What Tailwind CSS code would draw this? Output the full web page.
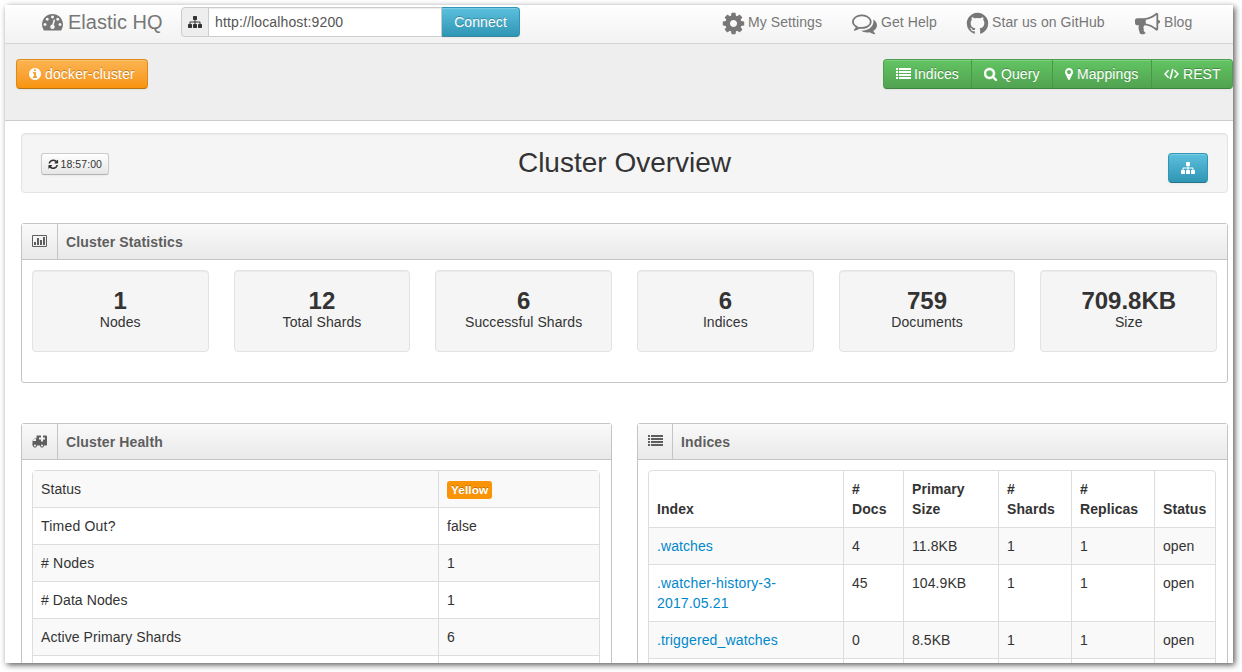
<!DOCTYPE html>
<html lang="en">
<head>
<meta charset="utf-8">
<title>Elastic HQ</title>
<script src="https://cdn.jsdelivr.net/npm/@tailwindcss/browser@4"></script>
</head>
<body class="h-[672px] overflow-hidden bg-white pt-[5px] pl-[5px] font-['Liberation_Sans',Arial,sans-serif] text-sm leading-5 tracking-[0.08px] text-[#333]">
<svg class="hidden" xmlns="http://www.w3.org/2000/svg">
  <symbol id="sitemap" viewBox="0 0 1792 1792"><path d="M1792 1248v320q0 40-28 68t-68 28h-320q-40 0-68-28t-28-68v-320q0-40 28-68t68-28h96v-192h-512v192h96q40 0 68 28t28 68v320q0 40-28 68t-68 28h-320q-40 0-68-28t-28-68v-320q0-40 28-68t68-28h96v-192h-512v192h96q40 0 68 28t28 68v320q0 40-28 68t-68 28h-320q-40 0-68-28t-28-68v-320q0-40 28-68t68-28h96v-192q0-52 38-90t90-38h512v-192h-96q-40 0-68-28t-28-68v-320q0-40 28-68t68-28h320q40 0 68 28t28 68v320q0 40-28 68t-68 28h-96v192h512q52 0 90 38t38 90v192h96q40 0 68 28t28 68z"/></symbol>
  <symbol id="list" viewBox="0 0 15 12"><path d="M0 0h2v2H0zM3 0h12v2H3zM0 3h2v2H0zM3 3h12v2H3zM0 6h2v2H0zM3 6h12v2H3zM0 9h2v2H0zM3 9h12v2H3z"/></symbol>
</svg>
<div class="h-[658px] w-[1228px] overflow-hidden bg-white shadow-[2px_2px_6px_rgba(0,0,0,0.65)]">
  <nav class="flex h-[39px] items-start border-b border-[#d4d4d4] bg-linear-to-b from-white to-[#f2f2f2] text-[#777]">
    <div class="flex w-[176px] pl-[37px] pt-[7px] text-xl tracking-normal">
      <svg class="mr-[5px] -mt-px size-[21px]" viewBox="0 0 1792 1792" fill="currentColor"><path d="M384 1152q0-53-37.500-90.500t-90.500-37.500-90.500 37.500-37.500 90.500 37.500 90.500 90.500 37.500 90.500-37.500 37.500-90.500zm192-448q0-53-37.500-90.500t-90.500-37.500-90.500 37.500-37.500 90.500 37.500 90.500 90.500 37.500 90.500-37.500 37.500-90.500zm428 481l101-382q6-26-7.500-48.500t-38.500-29.500-48 6.500-30 39.500l-101 382q-60 5-107 43.500t-63 98.500q-20 77 20 146t117 89 146-20 89-117q16-60-6-117t-72-91zm660-33q0-53-37.500-90.500t-90.500-37.500-90.500 37.500-37.500 90.500 37.500 90.500 90.500 37.500 90.500-37.500 37.500-90.500zm-640-640q0-53-37.500-90.500t-90.500-37.500-90.500 37.500-37.500 90.500 37.500 90.500 90.500 37.500 90.500-37.500 37.500-90.500zm448 192q0-53-37.500-90.500t-90.500-37.500-90.500 37.500-37.500 90.500 37.500 90.500 90.500 37.500 90.500-37.500 37.500-90.500zm320 448q0 261-141 483-19 29-54 29h-1402q-35 0-54-29-141-221-141-483 0-182 71-348t191-286 286-191 348-71 348 71 286 191 191 286 71 348z"/></svg>
      <span class="leading-5">Elastic HQ</span>
    </div>
    <div class="mt-[2px] flex h-[30px]">
      <div class="flex w-7 items-center justify-center rounded-l border border-[#ccc] bg-[#eee] text-[#333]"><svg class="size-[14px]" fill="currentColor"><use href="#sitemap"/></svg></div>
      <div class="-ml-px w-[234px] border border-[#ccc] bg-white py-1 pl-[6px] tracking-[0.14px] text-[#555] shadow-[inset_0_1px_1px_rgba(0,0,0,0.075)]">http://localhost:9200</div>
      <div class="w-[78px] rounded-r border border-l-0 border-[#2f96b4] border-b-[#1f6377]/60 bg-linear-to-b from-[#5bc0de] to-[#2f96b4] py-1 text-center text-white shadow-[inset_0_1px_0_rgba(255,255,255,0.2),0_1px_2px_rgba(0,0,0,0.05)] text-shadow-[0_-1px_0_rgba(0,0,0,0.25)]">Connect</div>
    </div>
    <div class="ml-[201px] flex pt-[7px]">
      <a class="flex w-[131px]"><svg class="mr-[2px] mt-[-1px] h-[25px] w-[25px]" viewBox="0 0 1792 1792" fill="currentColor"><path d="M1152 896q0-106-75-181t-181-75-181 75-75 181 75 181 181 75 181-75 75-181zm512-109v222q0 12-8 23t-20 13l-185 28q-19 54-39 91 35 50 107 138 10 12 10 25t-9 23q-27 37-99 108t-94 71q-12 0-26-9l-138-108q-44 23-91 38-16 136-29 186-7 28-36 28h-222q-14 0-24.500-8.500t-11.500-21.500l-28-184q-49-16-90-37l-141 107q-10 9-25 9-14 0-25-11-126-114-165-168-7-10-7-23 0-12 8-23 15-21 51-66.500t54-70.500q-27-50-41-99l-183-27q-13-2-21-12.500t-8-23.500v-222q0-12 8-23t19-13l186-28q14-46 39-92-40-57-107-138-10-12-10-24 0-10 9-23 26-36 98.500-107.500t94.500-71.500q13 0 26 10l138 107q44-23 91-38 16-136 29-186 7-28 36-28h222q14 0 24.500 8.500t11.500 21.500l28 184q49 16 90 37l142-107q9-9 24-9 13 0 25 10 129 119 165 170 7 8 7 22 0 12-8 23-15 21-51 66.500t-54 70.500q26 50 41 98l183 28q13 2 21 12.500t8 23.500z"/></svg>My Settings</a>
      <a class="flex w-[113px]"><svg class="mr-[4px] mt-[-1px] size-[25px]" viewBox="0 0 1792 1792" fill="currentColor"><path d="M704 384q-153 0-286 52t-211.500 141-78.500 191q0 82 53 158t149 132l97 56-35 84q34-20 62-39l44-31 53 10q78 14 153 14 153 0 286-52t211.500-141 78.500-191-78.500-191-211.500-141-286-52zm0-128q191 0 353.500 68.500t256.500 186.500 94 257-94 257-256.500 186.500-353.500 68.500q-86 0-176-16-124 88-278 128-36 9-86 16h-3q-11 0-20.500-8t-11.500-21q-1-3-1-6.500t.5-6.500 2-6l2.500-5 3.500-5.500 4-5 4.500-5 4-4.500q5-6 23-25t26-29.500 22.500-29 25-38.500 20.500-44q-124-72-195-177t-71-224q0-139 94-257t256.500-186.500 353.500-68.500zm822 1169q10 24 20.500 44t25 38.500 22.500 29 26 29.500 23 25q1 1 4 4.500t4.500 5 4 5 3.500 5.500l2.500 5 2 6 .5 6.500-1 6.500q-3 14-13 22t-22 7q-50-7-86-16-154-40-278-128-90 16-176 16-271 0-472-132 58 4 88 4 161 0 309-45t264-129q125-92 192-212t67-254q0-77-23-152 129 71 204 178t75 230q0 120-71 224.500t-195 176.500z"/></svg>Get Help</a>
      <a class="flex w-[170px]"><svg class="mr-[2px] mt-[-1px] size-[25px]" viewBox="0 0 1792 1792" fill="currentColor"><path d="M896 128q209 0 385.500 103t279.500 279.500 103 385.500q0 251-146.500 451.500t-378.500 277.500q-27 5-40-7t-13-30q0-3 .5-76.500t.5-134.500q0-97-52-142 57-6 102.500-18t94-39 81-66.500 53-105 20.500-150.500q0-119-79-206 37-91-8-204-28-9-81 11t-92 44l-38 24q-93-26-192-26t-192 26q-16-11-42.500-27t-83.500-38.500-85-13.500q-45 113-8 204-79 87-79 206 0 85 20.500 150t52.500 105 80.500 67 94 39 102.500 18q-39 36-49 103-21 10-45 15t-57 5-65.500-21.500-55.500-62.500q-19-32-48.500-52t-49.500-24l-20-3q-21 0-29 4.500t-5 11.500 9 14 13 12l7 5q22 10 43.500 38t31.500 51l10 23q13 38 44 61.500t67 30 69.500 7 55.500-3.500l23-4q0 38 .5 88.500t.5 54.500q0 18-13 30t-40 7q-232-77-378.500-277.500t-146.500-451.500q0-209 103-385.500t279.500-279.500 385.500-103z"/></svg>Star us on GitHub</a>
      <a class="flex"><svg class="mr-[4px] mt-[-1px] size-[25px]" viewBox="0 0 1792 1792" fill="currentColor"><path d="M1664 640q53 0 90.500 37.500t37.500 90.500-37.500 90.500-90.500 37.500v384q0 52-38 90t-90 38q-417-347-812-380-58 19-91 66t-31 100.500 40 92.500q-20 33-23 65.500t6 58 33.500 55 48 50 61.500 50.500q-29 58-111.500 83t-168.500 11.500-132-55.500q-7-23-29.500-87.500t-32-94.500-23-89-15-101 3.500-98.500 22-110.500h-122q-66 0-113-47t-47-113v-192q0-66 47-113t113-47h480q435 0 896-384 52 0 90 38t38 90v384zm-128 604v-954q-394 302-768 343v270q377 42 768 341z"/></svg>Blog</a>
    </div>
  </nav>

  <div class="flex h-[77px] items-start justify-between border-b border-[#ccc] bg-[#eee] pl-[11px] pt-[15px] text-white text-shadow-[0_-1px_0_rgba(0,0,0,0.25)]">
    <div class="flex h-[30px] w-[132px] items-center rounded border border-[#de8a14] border-b-[#b5740f] bg-linear-to-b from-[#fbb450] to-[#f89406] pl-[11px] tracking-[0.14px] shadow-[inset_0_1px_0_rgba(255,255,255,0.2),0_1px_2px_rgba(0,0,0,0.05)]">
      <svg class="mr-[3px] size-[14px]" viewBox="0 0 1792 1792" fill="currentColor"><path d="M1152 1376v-160q0-14-9-23t-23-9h-96v-512q0-14-9-23t-23-9h-320q-14 0-23 9t-9 23v160q0 14 9 23t23 9h96v320h-96q-14 0-23 9t-9 23v160q0 14 9 23t23 9h448q14 0 23-9t9-23zm-128-896v-160q0-14-9-23t-23-9h-192q-14 0-23 9t-9 23v160q0 14 9 23t23 9h192q14 0 23-9t9-23zm640 416q0 209-103 385.500t-279.500 279.500-385.500 103-385.500-103-279.500-279.500-103-385.500 103-385.500 279.500-279.500 385.500-103 385.500 103 279.500 279.500 103 385.500z"/></svg>docker-cluster
    </div>
    <div class="flex h-[30px] w-[350px] rounded border border-[#4c9f4c] border-b-[#3d853d] bg-linear-to-b from-[#62c462] to-[#51a351] shadow-[inset_0_1px_0_rgba(255,255,255,0.2),0_1px_2px_rgba(0,0,0,0.05)]">
      <div class="flex w-[88px] items-center border-r border-[#4a974a] pl-3"><svg class="mr-[3px] h-[12px] w-[15px]" fill="currentColor"><use href="#list"/></svg>Indices</div>
      <div class="flex w-[81px] items-center border-r border-[#4a974a] pl-3"><svg class="mr-[3px] size-[14px]" viewBox="64 0 1792 1792" fill="currentColor"><path d="M1216 832q0-185-131.500-316.500t-316.500-131.500-316.500 131.500-131.500 316.500 131.500 316.500 316.500 131.500 316.500-131.500 131.500-316.500zm512 832q0 52-38 90t-90 38q-54 0-90-38l-343-342q-179 124-399 124-143 0-273.500-55.500t-225-150-150-225-55.500-273.500 55.500-273.500 150-225 225-150 273.500-55.500 273.500 55.500 225 150 150 225 55.500 273.500q0 220-124 399l343 343q37 37 37 90z" stroke="currentColor" stroke-width="60"/></svg>Query</div>
      <div class="flex w-[99px] items-center border-r border-[#4a974a] pl-3"><svg class="mr-[4px] h-[14px] w-[8px]" viewBox="384 0 1024 1792" fill="currentColor"><path d="M1152 640q0-106-75-181t-181-75-181 75-75 181 75 181 181 75 181-75 75-181zm256 0q0 109-33 179l-364 774q-16 33-47.500 52t-67.500 19-67.500-19-46.500-52l-365-774q-33-70-33-179 0-212 150-362t362-150 362 150 150 362z"/></svg>Mappings</div>
      <div class="flex items-center pl-3"><svg class="mr-[4px] h-[12px] w-[15px]" viewBox="0 0 15 12" fill="none" stroke="currentColor" stroke-width="1.6"><path d="M4.600 2.300L1 6l3.600 3.700M10.400 2.300L14 6l-3.600 3.700M8.800 1L6.200 11"/></svg>REST</div>
    </div>
  </div>

  <main class="pl-4 pr-[5px] pt-[12px]">
    <header class="flex h-[60px] items-start justify-between rounded border border-[#e3e3e3] bg-[#f5f5f5] px-[19px] pt-[19px] shadow-[inset_0_1px_1px_rgba(0,0,0,0.05)]">
      <div class="flex h-[22px] w-[68px] items-center rounded-[3px] border border-[#ccc] border-b-[#b3b3b3] bg-linear-to-b from-white to-[#e6e6e6] pl-[6px] text-[10.5px] shadow-[0_1px_2px_rgba(0,0,0,0.05)]"><svg class="mr-[2px] size-[10.5px]" viewBox="64 64 1664 1664" fill="currentColor"><path d="M1639 1056q0 5-1 7-64 268-268 434.500t-478 166.500q-146 0-282.500-55t-243.500-157l-129 129q-19 19-45 19t-45-19-19-45v-448q0-26 19-45t45-19h448q26 0 45 19t19 45-19 45l-137 137q71 66 161 102t187 36q134 0 250-65t186-179q11-17 53-117 8-23 30-23h192q13 0 22.500 9.500t9.500 22.500zm25-800v448q0 26-19 45t-45 19h-448q-26 0-45-19t-19-45 19-45l138-138q-148-137-349-137-134 0-250 65t-186 179q-11 17-53 117-8 23-30 23h-199q-13 0-22.500-9.500t-9.500-22.500v-7q65-268 270-434.500t480-166.500q146 0 284 55.500t245 156.500l130-129q19-19 45-19t45 19 19 45z"/></svg>18:57:00</div>
      <h1 class="-mt-[5px] ml-[-28px] text-[28px] leading-[30px] tracking-normal">Cluster Overview</h1>
      <div class="flex h-[30px] w-10 items-center justify-center rounded border border-[#2f96b4] border-b-[#24748c] bg-linear-to-b from-[#5bc0de] to-[#2f96b4] text-white shadow-[inset_0_1px_0_rgba(255,255,255,0.2),0_1px_2px_rgba(0,0,0,0.05)]"><svg class="size-[14px]" fill="currentColor"><use href="#sitemap"/></svg></div>
    </header>

    <section class="mt-[30px] h-[160px] rounded-[3px] border border-[#c4c4c4]">
      <div class="flex h-9 border-b border-[#c4c4c4] bg-linear-to-b from-[#fafafa] to-[#e9e9e9] text-[#5e5e5e]">
        <div class="w-9 border-r border-[#c4c4c4] pl-[10px] pt-[11px]"><svg class="h-[12px] w-[15px]" viewBox="0 0 15 12" fill="currentColor"><path fill-rule="evenodd" d="M1 0h13q1 0 1 1v10q0 1-1 1H1q-1 0-1-1V1q0-1 1-1zM1 1v10h13V1z"/><path d="M2 7h2v3H2zM5 3h2v7H5zM8 5h2v5H8zM11 2h2v8h-2z"/></svg></div>
        <h2 class="pl-2 pt-[8px] font-bold tracking-[0.14px]">Cluster Statistics</h2>
      </div>
      <div class="grid grid-cols-6 gap-x-[25.200px] px-[10px] pt-[10px] text-center">
        <div class="h-[82px] rounded border border-[#e3e3e3] bg-[#f5f5f5] pt-[20px] shadow-[inset_0_1px_1px_rgba(0,0,0,0.05)]"><b class="mb-px block text-2xl leading-5 tracking-normal">1</b>Nodes</div>
        <div class="h-[82px] rounded border border-[#e3e3e3] bg-[#f5f5f5] pt-[20px] shadow-[inset_0_1px_1px_rgba(0,0,0,0.05)]"><b class="mb-px block text-2xl leading-5 tracking-normal">12</b>Total Shards</div>
        <div class="h-[82px] rounded border border-[#e3e3e3] bg-[#f5f5f5] pt-[20px] shadow-[inset_0_1px_1px_rgba(0,0,0,0.05)]"><b class="mb-px block text-2xl leading-5 tracking-normal">6</b>Successful Shards</div>
        <div class="h-[82px] rounded border border-[#e3e3e3] bg-[#f5f5f5] pt-[20px] shadow-[inset_0_1px_1px_rgba(0,0,0,0.05)]"><b class="mb-px block text-2xl leading-5 tracking-normal">6</b>Indices</div>
        <div class="h-[82px] rounded border border-[#e3e3e3] bg-[#f5f5f5] pt-[20px] shadow-[inset_0_1px_1px_rgba(0,0,0,0.05)]"><b class="mb-px block text-2xl leading-5 tracking-normal">759</b>Documents</div>
        <div class="h-[82px] rounded border border-[#e3e3e3] bg-[#f5f5f5] pt-[20px] shadow-[inset_0_1px_1px_rgba(0,0,0,0.05)]"><b class="mb-px block text-2xl leading-5 tracking-normal">709.8KB</b>Size</div>
      </div>
    </section>

    <div class="mt-10 flex justify-between">
      <section class="h-[300px] w-[591px] rounded-[3px] border border-[#c4c4c4]">
        <div class="flex h-9 border-b border-[#c4c4c4] bg-linear-to-b from-[#fafafa] to-[#e9e9e9] text-[#5e5e5e]">
          <div class="w-9 border-r border-[#c4c4c4] pl-[10px] pt-[11px]"><svg class="h-[12.5px] w-[15px]" viewBox="64 128 1920 1600" fill="currentColor"><path d="M576 1472q0-52-38-90t-90-38-90 38-38 90 38 90 90 38 90-38 38-90zm-384-576h384v-256h-158q-14 2-22 9l-195 195q-7 12-9 22v30zm1280 576q0-52-38-90t-90-38-90 38-38 90 38 90 90 38 90-38 38-90zm256-800v-192q0-14-9-23t-23-9h-224v-224q0-14-9-23t-23-9h-192q-14 0-23 9t-9 23v224h-224q-14 0-23 9t-9 23v192q0 14 9 23t23 9h224v224q0 14 9 23t23 9h192q14 0 23-9t9-23v-224h224q14 0 23-9t9-23zm256-480v1216q0 26-19 45t-45 19h-320q0 106-75 181t-181 75-181-75-75-181h-384q0 106-75 181t-181 75-181-75-75-181h-64q-26 0-45-19t-19-45 19-45 45-19v-416q0-26 13-58t32-51l198-198q19-19 51-32t58-13h160v-320q0-26 19-45t45-19h1152q26 0 45 19t19 45z"/></svg></div>
          <h2 class="pl-2 pt-[8px] font-bold tracking-[0.14px]">Cluster Health</h2>
        </div>
        <div class="mx-[10px] mt-[10px] w-[568px] rounded border border-[#ddd]">
          <div class="grid grid-cols-[406px_1fr] divide-x divide-[#ddd] bg-[#f9f9f9]"><div class="p-2">Status</div><div class="flex items-center p-2"><span class="mt-[2px] flex h-[18px] items-center rounded-[3px] bg-[#f89406] px-1 text-[11.840px] font-bold text-white text-shadow-[0_-1px_0_rgba(0,0,0,0.25)]">Yellow</span></div></div>
          <div class="grid grid-cols-[406px_1fr] divide-x divide-[#ddd] border-t border-[#ddd]"><div class="p-2 tracking-[0.2px]">Timed Out?</div><div class="p-2">false</div></div>
          <div class="grid grid-cols-[406px_1fr] divide-x divide-[#ddd] border-t border-[#ddd] bg-[#f9f9f9]"><div class="p-2 tracking-[0.2px]"># Nodes</div><div class="p-2">1</div></div>
          <div class="grid grid-cols-[406px_1fr] divide-x divide-[#ddd] border-t border-[#ddd]"><div class="p-2"># Data Nodes</div><div class="p-2">1</div></div>
          <div class="grid grid-cols-[406px_1fr] divide-x divide-[#ddd] border-t border-[#ddd] bg-[#f9f9f9]"><div class="p-2">Active Primary Shards</div><div class="p-2">6</div></div>
          <div class="grid h-[37px] grid-cols-[406px_1fr] divide-x divide-[#ddd] border-t border-[#ddd]"><div></div><div></div></div>
        </div>
      </section>

      <section class="h-[300px] w-[591px] rounded-[3px] border border-[#c4c4c4]">
        <div class="flex h-9 border-b border-[#c4c4c4] bg-linear-to-b from-[#fafafa] to-[#e9e9e9] text-[#5e5e5e]">
          <div class="w-[35px] border-r border-[#c4c4c4] pl-[10px] pt-[11px]"><svg class="h-[12px] w-[15px]" fill="currentColor"><use href="#list"/></svg></div>
          <h2 class="pl-2 pt-[8px] font-bold tracking-[0.14px]">Indices</h2>
        </div>
        <div class="mx-[10px] mt-[10px] w-[568px] rounded border border-[#ddd]">
          <div class="grid grid-cols-[194px_60px_95px_73px_83px_1fr] font-bold *:border-l *:border-[#ddd] *:p-2 *:first:border-l-0"><div class="flex items-end">Index</div><div>#<br>Docs</div><div>Primary Size</div><div>#<br>Shards</div><div>#<br>Replicas</div><div class="flex items-end">Status</div></div>
          <div class="grid grid-cols-[194px_60px_95px_73px_83px_1fr] border-t border-[#ddd] bg-[#f9f9f9] *:border-l *:border-[#ddd] *:p-2 *:first:border-l-0"><div class="text-[#0088cc]">.watches</div><div>4</div><div>11.8KB</div><div>1</div><div>1</div><div>open</div></div>
          <div class="grid grid-cols-[194px_60px_95px_73px_83px_1fr] border-t border-[#ddd] *:border-l *:border-[#ddd] *:p-2 *:first:border-l-0"><div class="tracking-[0.16px] text-[#0088cc]">.watcher-history-3-<br>2017.05.21</div><div>45</div><div>104.9KB</div><div>1</div><div>1</div><div>open</div></div>
          <div class="grid grid-cols-[194px_60px_95px_73px_83px_1fr] border-t border-[#ddd] bg-[#f9f9f9] *:border-l *:border-[#ddd] *:p-2 *:first:border-l-0"><div class="tracking-[0.14px] text-[#0088cc]">.triggered_watches</div><div>0</div><div>8.5KB</div><div>1</div><div>1</div><div>open</div></div>
          <div class="grid h-[37px] grid-cols-[194px_60px_95px_73px_83px_1fr] border-t border-[#ddd] *:border-l *:border-[#ddd] *:first:border-l-0"><div></div><div></div><div></div><div></div><div></div><div></div></div>
        </div>
      </section>
    </div>
  </main>
</div>
</body>
</html>
